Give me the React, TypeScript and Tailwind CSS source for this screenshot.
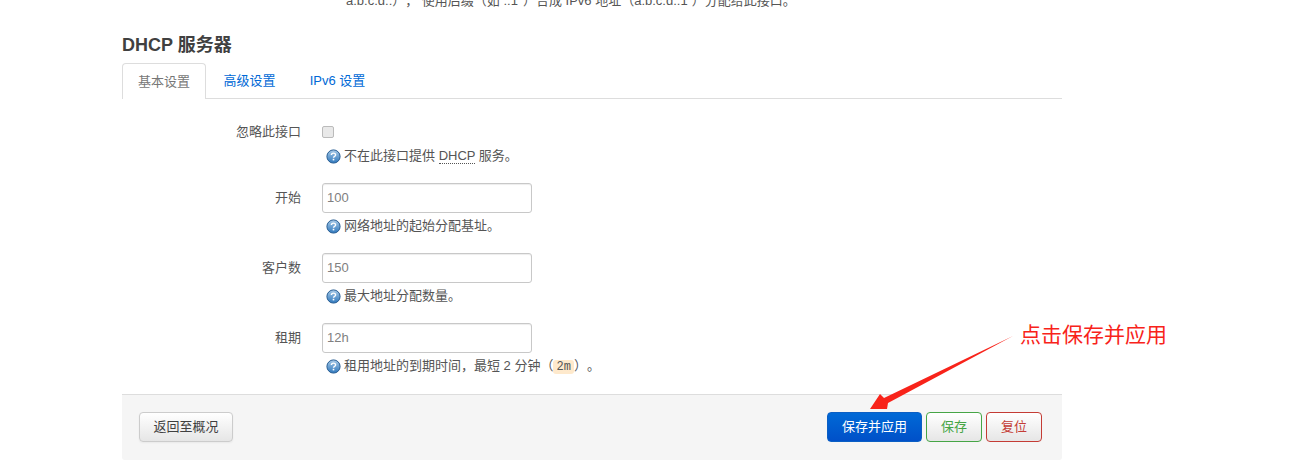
const font = { fontFamily: '"Liberation Sans", "Noto Sans CJK SC", sans-serif' };

function HelpIcon() {
  return (
    <svg width="15" height="15" viewBox="0 0 15 15" className="shrink-0">
      <defs>
        <linearGradient id="help-fill" x1="0" y1="0" x2="0" y2="1">
          <stop offset="0" stopColor="#a9cbe8" />
          <stop offset="1" stopColor="#2f78bd" />
        </linearGradient>
      </defs>
      <circle cx="7.5" cy="7.5" r="6.6" fill="url(#help-fill)" stroke="#2a5f94" strokeWidth="1" />
      <path d="M5.4 6c0-1.3 1-1.9 2.1-1.9s2.1.6 2.1 1.8c0 1.5-2.1 1.4-2.1 2.9" fill="none" stroke="#fff" strokeWidth="1.4" />
      <rect x="6.7" y="9.8" width="1.6" height="1.6" fill="#fff" />
    </svg>
  );
}

function Help({ children }: { children: React.ReactNode }) {
  return (
    <div className="flex h-5 items-center gap-[3px] pl-1 text-[13px] text-[#555]">
      <HelpIcon />
      <span>{children}</span>
    </div>
  );
}

function Field({ label, value, help }: { label: string; value: string; help: React.ReactNode }) {
  return (
    <div className="flex h-[70px]">
      <label className="mr-[21px] flex h-[30px] w-[179px] items-center justify-end text-[13px] text-[#555]">{label}</label>
      <div>
        <div className="flex h-[30px] w-[210px] items-center rounded-[3px] border border-[#c8c8c8] px-1 text-[13px] text-[#808080] shadow-[inset_0_1px_1px_rgba(0,0,0,0.075)]">
          {value}
        </div>
        <div className="mt-[3px]">
          <Help>{help}</Help>
        </div>
      </div>
    </div>
  );
}

export default function App() {
  return (
    <div className="relative h-[463px] w-[1311px] overflow-hidden bg-white [text-spacing-trim:space-all]" style={font}>
      <div className="-mt-[9px] ml-[346px] h-5 text-[13px] leading-5 whitespace-nowrap text-[#555]">
        a:b:c:d::）， 使用后缀（如 ::1<span className="ml-[5px]">）</span>合成 IPv6 地址（a:b:c:d::1<span className="ml-[4px]">）</span>分配给此接口。
      </div>

      <div className="ml-[122px] w-[940px]">
        <h3 className="mt-[22px] h-[24px] text-[18px] leading-[24px] font-bold text-[#404040]">DHCP 服务器</h3>

        <div className="mt-[6px] flex h-[36px] border-b border-[#ddd] text-[13px]">
          <div className="flex h-[36px] w-[84px] items-center justify-center rounded-t-[4px] border border-b-0 border-[#ddd] bg-white text-[#777]">
            基本设置
          </div>
          <div className="flex h-[35px] w-[87px] items-center justify-center text-[#0069d6]">高级设置</div>
          <div className="flex h-[35px] w-[89px] items-center justify-center text-[#0069d6]">IPv6 设置</div>
        </div>

        <div className="flex h-[84px] pt-[26px]">
          <label className="mr-[21px] flex h-[13px] w-[179px] items-center justify-end text-[13px] text-[#555]">忽略此接口</label>
          <div>
            <div className="mt-px h-3 w-3 rounded-[2px] border border-[#bbb] bg-[#e9e9e9]" />
            <div className="mt-[8px]">
              <Help>
                不在此接口提供 <span className="border-b border-dotted border-[#555]">DHCP</span> 服务。
              </Help>
            </div>
          </div>
        </div>

        <Field label="开始" value="100" help="网络地址的起始分配基址。" />
        <Field label="客户数" value="150" help="最大地址分配数量。" />
        <Field
          label="租期"
          value="12h"
          help={
            <>
              租用地址的到期时间，最短 2 分钟（
              <code className="rounded-[3px] bg-[#fee9cc] px-[3px] font-['Liberation_Mono'] text-[12px] text-[#555]">2m</code>
              ）。
            </>
          }
        />

        <div className="mt-[1px] flex h-[66px] items-start justify-between rounded-b-[3px] border-t border-[#ddd] bg-[#f5f5f5] pt-[17px] pr-[20px] pl-[17px] text-[13px]">
          <button className="h-[30px] w-[94px] rounded-[4px] border border-[#ccc] bg-gradient-to-b from-white to-[#e6e6e6] text-[#404040] shadow-[0_1px_2px_rgba(0,0,0,0.05)]">
            返回至概况
          </button>
          <div className="flex gap-1">
            <button className="h-[30px] w-[95px] rounded-[4px] border border-[#0b5fc4] bg-gradient-to-b from-[#0069d6] to-[#0050c8] text-white">
              保存并应用
            </button>
            <button className="h-[30px] w-[56px] rounded-[4px] border border-[#46a546] bg-gradient-to-b from-white to-[#e6e6e6] text-[#46a546]">
              保存
            </button>
            <button className="h-[30px] w-[56px] rounded-[4px] border border-[#c43c35] bg-gradient-to-b from-white to-[#e6e6e6] text-[#c43c35]">
              复位
            </button>
          </div>
        </div>
      </div>

      <svg className="absolute top-0 left-0" width="1311" height="463" viewBox="0 0 1311 463">
        <polygon points="870,409 880,394 884,398 1013,336 888,403 887,409" fill="#f8231a" />
      </svg>
      <div className="absolute top-[321px] left-[1020px] text-[21px] leading-7 whitespace-nowrap text-[#f8231a]">点击保存并应用</div>
    </div>
  );
}
